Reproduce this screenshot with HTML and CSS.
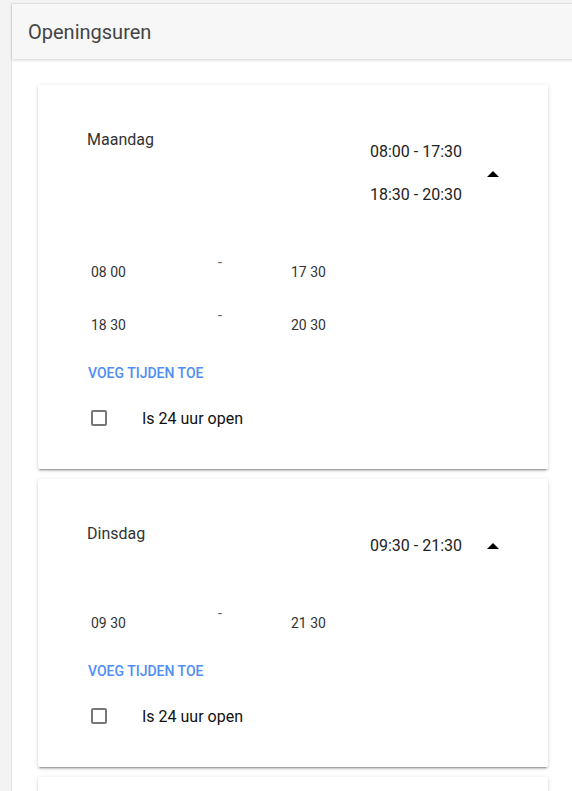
FILE: index.html
```html
<!DOCTYPE html>
<html lang="nl">
<head>
<meta charset="utf-8">
<title>Openingsuren</title>
<link rel="stylesheet" href="styles.css">
</head>
<body>
<div class="panel">
  <div class="panel-header">Openingsuren</div>
  <div class="panel-body">
    <div class="card">
      <div class="card-head">
        <div class="day">Maandag</div>
        <div class="summary">
          <div class="times">
            <div>08:00 - 17:30</div>
            <div>18:30 - 20:30</div>
          </div>
          <span class="arrow"></span>
        </div>
      </div>
      <div class="rows">
        <div class="row"><span class="val">08 00</span><span class="dash">-</span><span class="val">17 30</span></div>
        <div class="row"><span class="val">18 30</span><span class="dash">-</span><span class="val">20 30</span></div>
      </div>
      <div class="add">VOEG TIJDEN TOE</div>
      <label class="check"><span class="box"></span><span>Is 24 uur open</span></label>
    </div>
    <div class="card">
      <div class="card-head">
        <div class="day">Dinsdag</div>
        <div class="summary">
          <div class="times">
            <div>09:30 - 21:30</div>
          </div>
          <span class="arrow"></span>
        </div>
      </div>
      <div class="rows">
        <div class="row"><span class="val">09 30</span><span class="dash">-</span><span class="val">21 30</span></div>
      </div>
      <div class="add">VOEG TIJDEN TOE</div>
      <label class="check"><span class="box"></span><span>Is 24 uur open</span></label>
    </div>
    <div class="card card-stub"></div>
  </div>
</div>
</body>
</html>
```
FILE: styles.css
```css
html, body {
  margin: 0;
  padding: 0;
}
body {
  background: #f3f3f3;
  font-family: Roboto, "Liberation Sans", Arial, sans-serif;
  overflow: hidden;
  height: 791px;
}
.panel {
  margin: 3px 0 0 11px;
  width: 600px;
  background: #fff;
  border-left: 1px solid #e2e2e2;
  border-top: 1px solid #e6e6e6;
  min-height: 800px;
}
.panel-header {
  height: 55px;
  display: flex;
  align-items: center;
  padding-left: 16px;
  background: #f7f7f7;
  font-size: 20px;
  color: #444;
  box-shadow: 0 1px 3px rgba(0,0,0,0.18);
  position: relative;
}
.panel-body {
  padding: 26px 0 0 26px;
}
.card {
  width: 510px;
  box-sizing: border-box;
  background: #fff;
  border-radius: 2px;
  box-shadow: 0 2px 2px rgba(0,0,0,0.14), 0 3px 1px -2px rgba(0,0,0,0.2), 0 1px 5px rgba(0,0,0,0.12);
  padding: 45px 49px 41px 49px;
  margin-bottom: 10px;
  color: #333;
}
.card-stub {
  height: 60px;
  padding: 0;
}
.card-head {
  display: flex;
  align-items: flex-start;
}
.day {
  flex: 1;
  font-size: 16px;
  line-height: 20px;
  color: #333;
}
.summary {
  margin-top: 12px;
  display: flex;
  align-items: center;
  gap: 25px;
}
.times {
  display: flex;
  flex-direction: column;
  gap: 23px;
  font-size: 16px;
  line-height: 20px;
  color: #222;
}
.arrow {
  width: 0;
  height: 0;
  border-left: 6px solid transparent;
  border-right: 6px solid transparent;
  border-bottom: 6px solid #000;
}
.rows {
  margin-top: 49px;
}
.row {
  height: 53px;
  display: grid;
  grid-template-columns: 127px 73px auto;
  align-items: start;
  padding-left: 4px;
  font-size: 14px;
  line-height: 16px;
  color: #333;
}
.val {
  margin-top: 10px;
}
.dash {
  color: #555;
}
.add {
  margin-top: 5px;
  padding-left: 1px;
  font-size: 14px;
  line-height: 16px;
  font-weight: 500;
  color: #4f8ef5;
}
.check {
  margin-top: 27px;
  display: flex;
  align-items: center;
  height: 20px;
  padding-left: 4px;
  gap: 35px;
  font-size: 16px;
  color: #111;
}
.box {
  width: 16px;
  height: 16px;
  box-sizing: border-box;
  border: 2px solid #777;
  border-radius: 2px;
}
```
